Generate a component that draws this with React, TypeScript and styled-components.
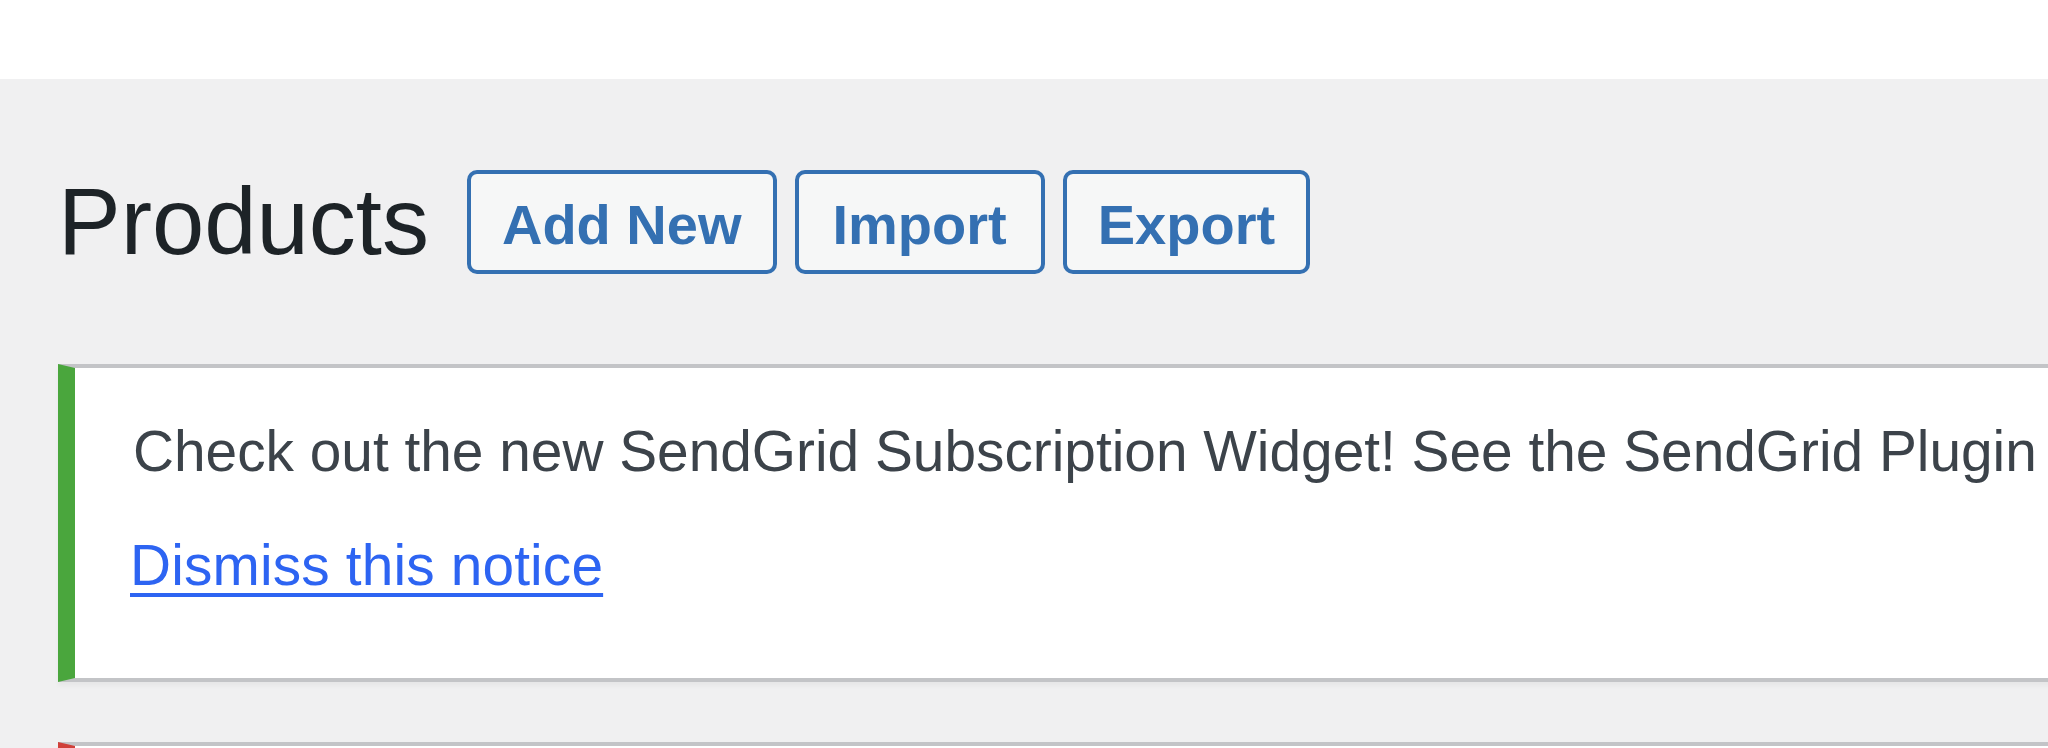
import React from "react";
import styled, { createGlobalStyle } from "styled-components";

const GlobalStyle = createGlobalStyle`
  html, body {
    margin: 0;
    padding: 0;
    background: #f0f0f1;
    overflow: hidden;
  }
  body {
    font-family: "Liberation Sans", Arial, sans-serif;
  }
`;

const Page = styled.div`
  width: 2048px;
  min-height: 748px;
  background: #f0f0f1;
  display: flex;
  flex-direction: column;
`;

const TopBand = styled.div`
  height: 79px;
  background: #ffffff;
`;

const Wrap = styled.div`
  padding: 82px 0 0 58px;
  display: flex;
  flex-direction: column;
`;

const HeaderRow = styled.div`
  display: flex;
  align-items: center;
`;

const Title = styled.h1`
  margin: 0 38px 0 0;
  font-family: "Liberation Sans", Arial, sans-serif;
  font-weight: 400;
  font-size: 94px;
  line-height: 122px;
  color: #1d2327;
`;

const Actions = styled.div`
  display: flex;
  gap: 18px;
`;

const ActionButton = styled.a<{ $pad: number }>`
  display: inline-block;
  box-sizing: border-box;
  height: 104px;
  padding: 6px ${(p) => p.$pad}px 0;
  border: 4px solid #3470b2;
  border-radius: 10px;
  background: #f6f7f7;
  color: #3470b2;
  font-family: "Liberation Sans", Arial, sans-serif;
  font-weight: 700;
  font-size: 56px;
  line-height: 90px;
  text-decoration: none;
  white-space: nowrap;
`;

const Notice = styled.div<{ $accent: string }>`
  box-sizing: border-box;
  margin-right: -40px;
  background: #ffffff;
  border: 4px solid #c3c4c7;
  border-left: 17px solid ${(p) => p.$accent};
  box-shadow: 0 4px 4px rgba(0, 0, 0, 0.04);
`;

const SuccessNotice = styled(Notice)`
  margin-top: 81px;
  padding: 41px 58px 70px;
`;

const ErrorNotice = styled(Notice)`
  margin-top: 60px;
  min-height: 200px;
`;

const Message = styled.p`
  margin: 0;
  font-family: "Liberation Sans", Arial, sans-serif;
  font-size: 56.8px;
  line-height: 85px;
  color: #3c434a;
  white-space: nowrap;
`;

const LinkLine = styled(Message)`
  margin: 29px 0 0 -3px;
  letter-spacing: 0.15px;
`;

const DismissLink = styled.a`
  color: #2d64f2;
  text-decoration: underline;
  text-decoration-thickness: 4px;
  text-underline-offset: 8px;
`;

export default function App() {
  return (
    <>
      <GlobalStyle />
      <Page>
        <TopBand />
        <Wrap>
          <HeaderRow>
            <Title>Products</Title>
            <Actions>
              <ActionButton $pad={31} href="#">Add New</ActionButton>
              <ActionButton $pad={34} href="#">Import</ActionButton>
              <ActionButton $pad={31} href="#">Export</ActionButton>
            </Actions>
          </HeaderRow>
          <SuccessNotice $accent="#4aa63d">
            <Message>
              Check out the new SendGrid Subscription Widget! See the SendGrid Plugin
            </Message>
            <LinkLine>
              <DismissLink href="#">Dismiss this notice</DismissLink>
            </LinkLine>
          </SuccessNotice>
          <ErrorNotice $accent="#d0403a" />
        </Wrap>
      </Page>
    </>
  );
}
